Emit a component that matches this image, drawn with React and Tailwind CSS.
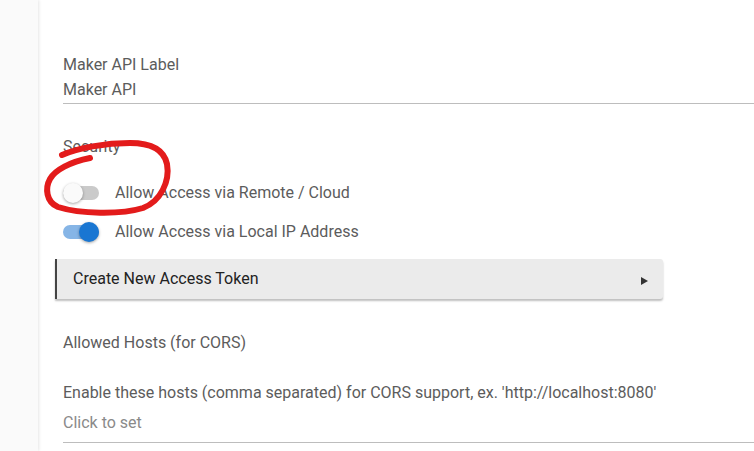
import React from 'react';

const Toggle = ({ on }) => (
  <div className={`relative h-[14px] w-9 rounded-full ${on ? 'bg-[#86b5e6]' : 'bg-[#cacaca]'}`}>
    <span
      className={`absolute top-[-3px] h-5 w-5 rounded-full shadow-[0_1px_3px_rgba(0,0,0,0.35)] ${
        on ? 'left-4 bg-[#1976d2]' : 'left-0 bg-[#fafafa]'
      }`}
    />
  </div>
);

const ToggleRow = ({ on, label, className }) => (
  <div className={`flex h-6 items-center gap-4 ${className}`}>
    <Toggle on={on} />
    <span>{label}</span>
  </div>
);

const App = () => {
  return (
    <div className="relative flex h-[451px] w-[754px] overflow-hidden bg-white font-['Roboto',sans-serif] text-[16px] leading-6 text-[#5c5c5c]">
      <aside className="w-[38px] shrink-0 bg-[#fafafa] shadow-[1px_0_3px_rgba(0,0,0,0.1)]" />
      <main className="flex-1 pl-[25px] pt-[53px]">
        <div>Maker API Label</div>
        <div className="mt-px">Maker API</div>
        <div className="mt-px h-px bg-[#bdbdbd]" />

        <div className="mt-[31px]">Security</div>
        <ToggleRow className="mt-[22px]" label="Allow Access via Remote / Cloud" />
        <ToggleRow className="mt-[15px]" on label="Allow Access via Local IP Address" />

        <div className="-ml-2 mt-[15px] flex h-10 w-[608px] items-center justify-between rounded-r-[3px] border-l-2 border-[#444] bg-[#ebebeb] pl-4 pr-[15px] text-[#222] shadow-[0_2px_2px_rgba(0,0,0,0.25)]">
          <span>Create New Access Token</span>
          <svg width="7" height="8" viewBox="0 0 7 8" className="mt-1">
            <path d="M0 0 L7 4 L0 8 Z" fill="#333" />
          </svg>
        </div>

        <div className="mt-[32px]">Allowed Hosts (for CORS)</div>
        <div className="mt-[26px]">Enable these hosts (comma separated) for CORS support, ex. 'http://localhost:8080'</div>
        <div className="mt-[6px] text-[#8a8a8a]">Click to set</div>
        <div className="mt-[7px] h-px bg-[#bdbdbd]" />
      </main>

      <svg className="pointer-events-none absolute left-0 top-0" width="754" height="451">
        <path
          d="M62 155 C78 148 105 143 130 143 C151 143 164 150 167 164 C170 181 161 201 143 208 C120 215 80 214 58 207 C46 202 45 188 50 179 C55 170 70 162 90 158"
          fill="none"
          stroke="#e31b1b"
          strokeWidth="6"
          strokeLinecap="round"
          strokeLinejoin="round"
        />
      </svg>
    </div>
  );
};

export default App;
